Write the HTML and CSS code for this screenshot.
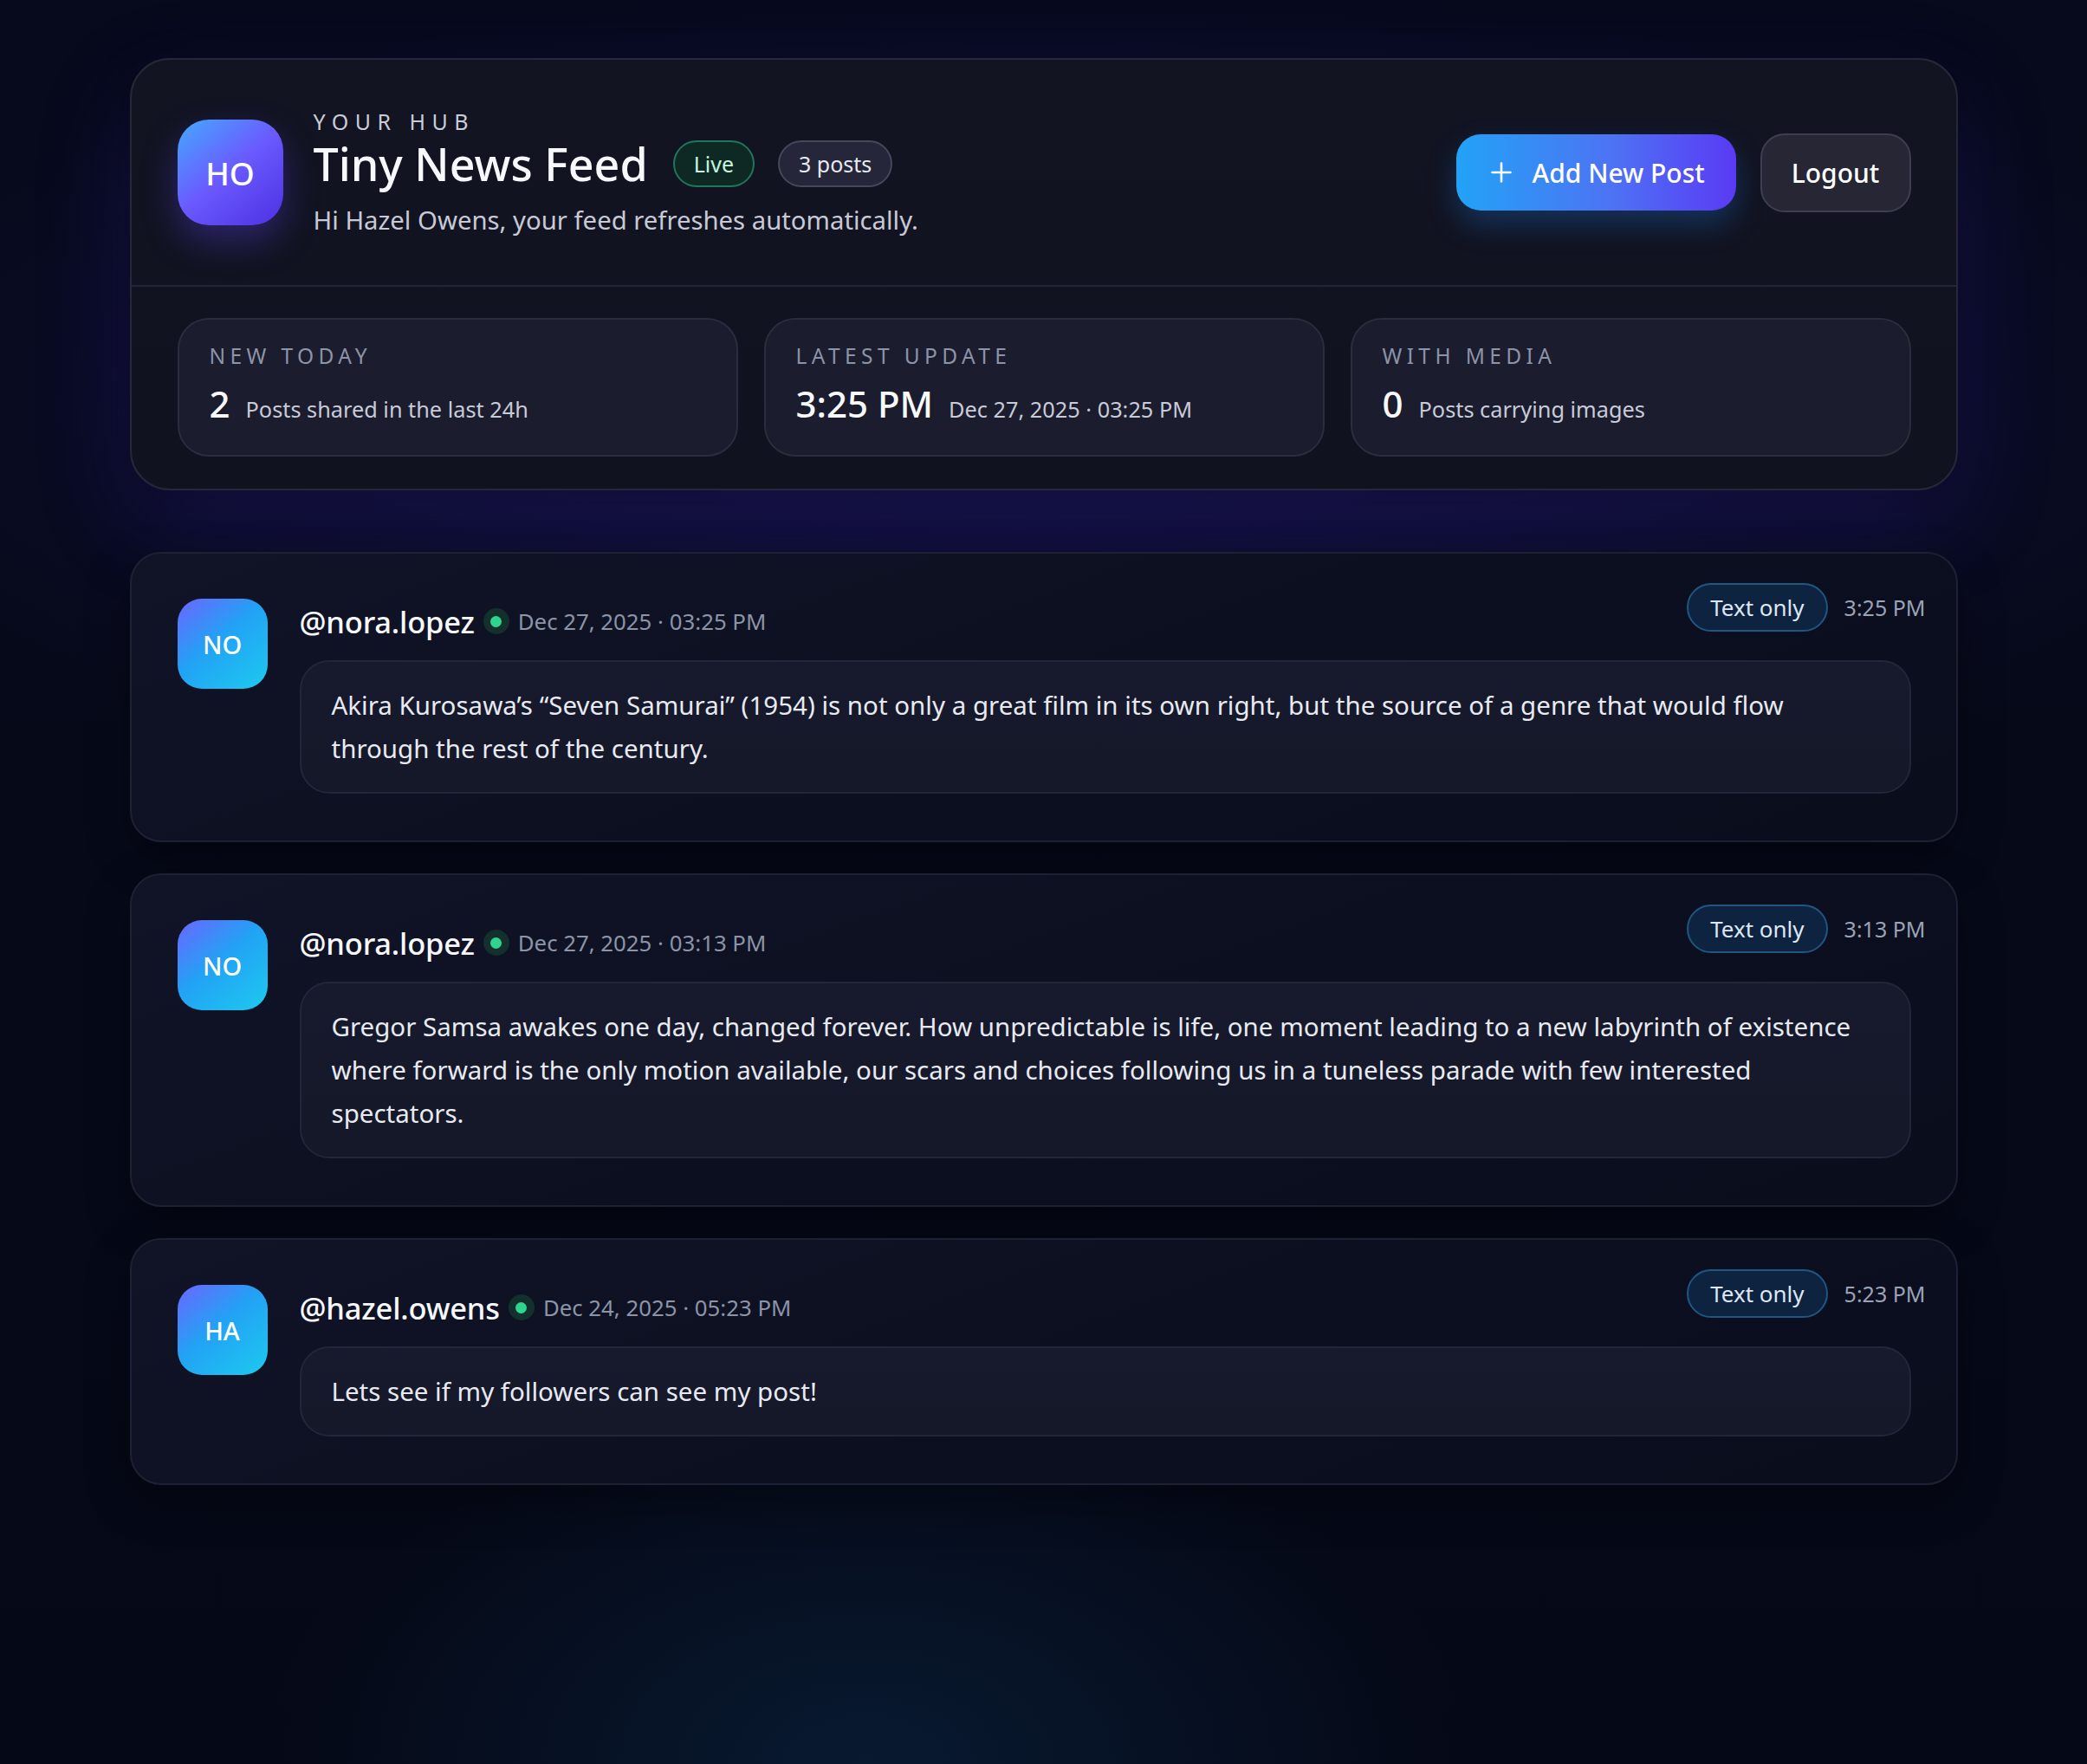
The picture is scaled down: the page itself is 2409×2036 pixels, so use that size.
FILE: index.html
```html
<!DOCTYPE html>
<html lang="en">
<head>
<meta charset="utf-8">
<title>Tiny News Feed</title>
<link rel="stylesheet" href="styles.css">
</head>
<body>
<main class="page">
  <section class="hub">
    <div class="hub-top">
      <div class="hub-id">
        <div class="hub-avatar">HO</div>
        <div class="hub-text">
          <div class="eyebrow">YOUR HUB</div>
          <div class="title-row">
            <h1 class="title">Tiny News Feed</h1>
            <span class="pill pill-live">Live</span>
            <span class="pill pill-count">3 posts</span>
          </div>
          <p class="subtitle">Hi Hazel Owens, your feed refreshes automatically.</p>
        </div>
      </div>
      <div class="hub-actions">
        <button class="btn btn-primary">
          <svg class="plus" viewBox="0 0 24 24" width="24" height="24"><path d="M12 1.5v21M1.5 12h21" stroke="#fff" stroke-width="2.6" stroke-linecap="round" fill="none"/></svg>
          <span>Add New Post</span>
        </button>
        <button class="btn btn-ghost">Logout</button>
      </div>
    </div>
    <div class="stats">
      <div class="stat">
        <div class="stat-label">NEW TODAY</div>
        <div class="stat-value"><span class="stat-num">2</span><span class="stat-sub">Posts shared in the last 24h</span></div>
      </div>
      <div class="stat">
        <div class="stat-label">LATEST UPDATE</div>
        <div class="stat-value"><span class="stat-num">3:25 PM</span><span class="stat-sub">Dec 27, 2025 · 03:25 PM</span></div>
      </div>
      <div class="stat">
        <div class="stat-label">WITH MEDIA</div>
        <div class="stat-value"><span class="stat-num">0</span><span class="stat-sub">Posts carrying images</span></div>
      </div>
    </div>
  </section>

  <section class="feed">
    <article class="post">
      <div class="avatar">NO</div>
      <div class="post-body">
        <div class="post-head">
          <span class="handle">@nora.lopez</span>
          <span class="online"><span class="online-dot"></span></span>
          <span class="post-date">Dec 27, 2025 · 03:25 PM</span>
        </div>
        <div class="post-content">Akira Kurosawa’s “Seven Samurai” (1954) is not only a great film in its own right, but the source of a genre that would flow through the rest of the century.</div>
      </div>
      <div class="post-meta"><span class="tag">Text only</span><span class="post-time">3:25 PM</span></div>
    </article>

    <article class="post">
      <div class="avatar">NO</div>
      <div class="post-body">
        <div class="post-head">
          <span class="handle">@nora.lopez</span>
          <span class="online"><span class="online-dot"></span></span>
          <span class="post-date">Dec 27, 2025 · 03:13 PM</span>
        </div>
        <div class="post-content">Gregor Samsa awakes one day, changed forever. How unpredictable is life, one moment leading to a new labyrinth of existence where forward is the only motion available, our scars and choices following us in a tuneless parade with few interested spectators.</div>
      </div>
      <div class="post-meta"><span class="tag">Text only</span><span class="post-time">3:13 PM</span></div>
    </article>

    <article class="post">
      <div class="avatar">HA</div>
      <div class="post-body">
        <div class="post-head">
          <span class="handle">@hazel.owens</span>
          <span class="online"><span class="online-dot"></span></span>
          <span class="post-date">Dec 24, 2025 · 05:23 PM</span>
        </div>
        <div class="post-content">Lets see if my followers can see my post!</div>
      </div>
      <div class="post-meta"><span class="tag">Text only</span><span class="post-time">5:23 PM</span></div>
    </article>
  </section>
</main>
</body>
</html>
```

FILE: styles.css
```css
* { box-sizing: border-box; }

html, body {
  margin: 0;
  padding: 0;
}

body {
  min-height: 2036px;
  font-family: "Noto Sans", "Open Sans", sans-serif;
  color: #eef0f6;
  background-color: #050816;
  background-image:
    radial-gradient(ellipse 700px 420px at 1000px 2036px, rgba(10, 40, 70, 0.55), rgba(10, 40, 70, 0) 100%),
    radial-gradient(ellipse 1500px 500px at 50% 480px, rgba(40, 28, 130, 0.32), rgba(40, 28, 130, 0) 100%),
    linear-gradient(180deg, #070a1c 0%, #060918 50%, #050816 100%);
}

.page {
  width: 2110px;
  margin: 0 auto;
  padding-top: 67px;
  padding-bottom: 100px;
}

/* ---------- HUB HEADER ---------- */
.hub {
  background: linear-gradient(180deg, #121422 0%, #10121f 100%);
  border: 2px solid #262838;
  border-radius: 46px;
  box-shadow: 0 40px 110px rgba(60, 40, 190, 0.24), 0 10px 40px rgba(0, 0, 0, 0.4);
}

.hub-top {
  display: flex;
  align-items: center;
  justify-content: space-between;
  padding: 55px 52px 55px 53px;
  border-bottom: 2px solid #23253a;
}

.hub-id {
  display: flex;
  align-items: center;
  gap: 35px;
}

.hub-avatar {
  width: 122px;
  height: 122px;
  border-radius: 36px;
  background: linear-gradient(140deg, #45a9ff 0%, #6a5bff 48%, #4d30e2 100%);
  display: flex;
  align-items: center;
  justify-content: center;
  font-size: 37px;
  font-weight: 500;
  color: #fff;
  box-shadow: 0 18px 40px rgba(95, 70, 240, 0.35);
}

.hub-text {
  display: flex;
  flex-direction: column;
}

.eyebrow {
  font-size: 25px;
  line-height: 32px;
  letter-spacing: 0.3em;
  color: #c9ccd8;
  margin-bottom: 0;
}

.title-row {
  display: flex;
  align-items: center;
  height: 66px;
}

.title {
  margin: 0 29px 0 0;
  font-size: 52px;
  font-weight: 500;
  line-height: 66px;
  color: #f7f8fc;
}

.pill {
  display: inline-flex;
  align-items: center;
  height: 54px;
  padding: 0 22px;
  border-radius: 999px;
  font-size: 25px;
  border: 2px solid;
}

.pill-live {
  background: #0e2924;
  border-color: #1f7659;
  color: #c4f6dd;
  margin-right: 27px;
}

.pill-count {
  background: #25263a;
  border-color: #45475b;
  color: #e8e9f1;
}

.subtitle {
  margin: 12px 0 0;
  font-size: 29.3px;
  line-height: 40px;
  color: #c7cad6;
}

.hub-actions {
  display: flex;
  align-items: center;
  gap: 28px;
}

.btn {
  font-family: inherit;
  font-weight: 500;
  font-size: 30px;
  color: #fff;
  cursor: pointer;
  display: inline-flex;
  align-items: center;
}

.btn-primary {
  height: 88px;
  width: 323px;
  padding: 0 0 0 40px;
  gap: 24px;
  border: none;
  border-radius: 28px;
  background: linear-gradient(90deg, #22a3f6 0%, #4d73f4 55%, #5a3af4 100%);
  box-shadow: 0 16px 34px rgba(34, 130, 240, 0.28);
}

.plus { flex: none; }

.btn-ghost {
  height: 91px;
  width: 174px;
  justify-content: center;
  border: 2px solid #3d3e51;
  border-radius: 28px;
  background: #262635;
}

/* ---------- STATS ---------- */
.stats {
  display: grid;
  grid-template-columns: repeat(3, 1fr);
  gap: 30px;
  padding: 36px 52px 37px 53px;
}

.stat {
  height: 160px;
  background: #1b1c2d;
  border: 2px solid #2b2c3e;
  border-radius: 36px;
  padding: 25px 34px 0 35px;
}

.stat-label {
  font-size: 24.5px;
  line-height: 34px;
  letter-spacing: 0.22em;
  color: #8c94a9;
}

.stat-value {
  display: flex;
  align-items: baseline;
  gap: 18px;
  margin-top: 12px;
  line-height: 52px;
}

.stat-num {
  font-size: 42px;
  font-weight: 500;
  color: #f8f9fc;
}

.stat-sub {
  font-size: 25.3px;
  color: #c8ccd8;
}

/* ---------- FEED ---------- */
.feed {
  margin-top: 71px;
  display: flex;
  flex-direction: column;
  gap: 36px;
}

.post {
  position: relative;
  display: flex;
  gap: 37px;
  padding: 52px 52px 54px 53px;
  border: 2px solid #1e2133;
  border-radius: 36px;
  background: linear-gradient(160deg, #101426 0%, #0b0f20 55%, #090d1c 100%);
  box-shadow: 0 18px 50px rgba(0, 0, 0, 0.35);
}

.avatar {
  flex: none;
  width: 104px;
  height: 104px;
  border-radius: 28px;
  background: linear-gradient(140deg, #6b66ff 0%, #22a2f5 45%, #1dcaef 100%);
  display: flex;
  align-items: center;
  justify-content: center;
  font-size: 29px;
  font-weight: 500;
  color: #fff;
}

.post-body {
  flex: 1;
  min-width: 0;
}

.post-head {
  display: flex;
  align-items: center;
  height: 52px;
  margin-bottom: 19px;
}

.handle {
  font-size: 34.5px;
  font-weight: 500;
  color: #f7f8fc;
  margin-right: 10px;
  letter-spacing: -0.2px;
}

.online {
  width: 30px;
  height: 30px;
  border-radius: 50%;
  background: #13302c;
  display: inline-flex;
  align-items: center;
  justify-content: center;
  margin-right: 10px;
}

.online-dot {
  width: 13px;
  height: 13px;
  border-radius: 50%;
  background: #2fd58f;
}

.post-date {
  font-size: 25.8px;
  color: #8c94a8;
}

.post-content {
  background: linear-gradient(180deg, #161a2c 0%, #141829 100%);
  border: 2px solid #22263a;
  border-radius: 34px;
  padding: 25px 35px;
  font-size: 29.5px;
  line-height: 50px;
  color: #e8eaf1;
}

.post-meta {
  position: absolute;
  top: 34px;
  right: 35px;
  display: flex;
  align-items: center;
  gap: 19px;
}

.tag {
  display: inline-flex;
  align-items: center;
  height: 56px;
  padding: 0 25px;
  border-radius: 999px;
  background: #0d2340;
  border: 2px solid #1e5782;
  font-size: 26px;
  color: #dde7f5;
}

.post-time {
  font-size: 25px;
  color: #9ba3b6;
}
```
